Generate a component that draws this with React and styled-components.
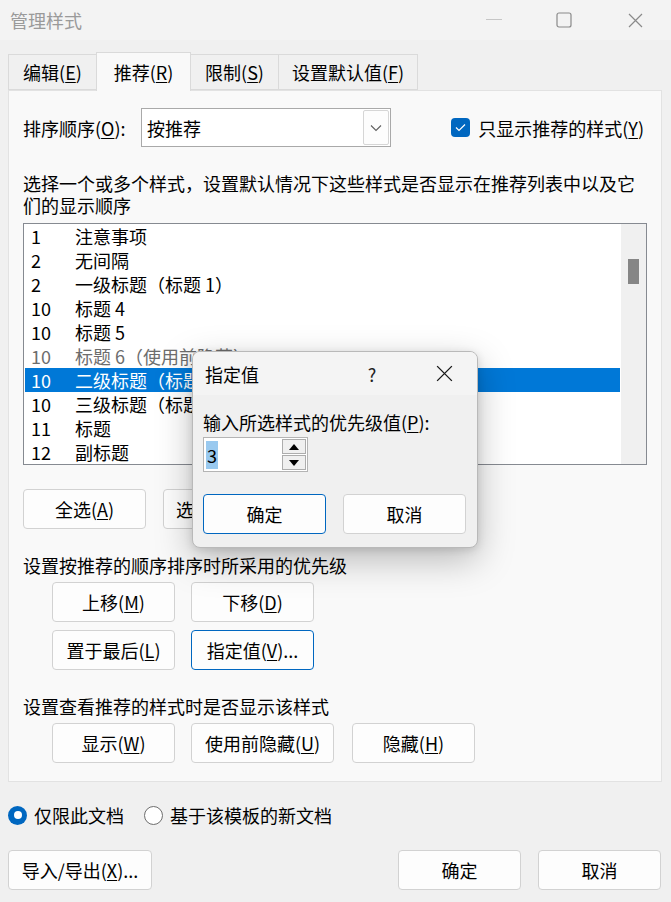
import styled, { createGlobalStyle } from "styled-components";

const GlobalStyle = createGlobalStyle`
  html, body {
    margin: 0;
    padding: 0;
    background: #f0f0f0;
  }
  body {
    font-family: "Noto Sans CJK SC", "Noto Sans", sans-serif;
    font-size: 18px;
    color: #000;
  }
`;

const Window = styled.div`
  position: relative;
  width: 671px;
  height: 902px;
  overflow: hidden;
  background: #f0f0f0;
`;

const TitleBar = styled.div`
  display: flex;
  align-items: center;
  height: 40px;
  padding-left: 10px;
  background: #f3f3f3;
  color: #9a9a9a;
`;

const TitleText = styled.div`
  flex: 1;
  line-height: 22px;
`;

const WinButton = styled.div`
  display: flex;
  align-items: center;
  justify-content: center;
  width: ${(p) => p.w || 70}px;
  height: 40px;
`;

const TabStrip = styled.div`
  display: flex;
  align-items: flex-end;
  height: 38px;
  margin: 12px 0 0 8px;
  position: relative;
  z-index: 1;
`;

const Tab = styled.div`
  box-sizing: border-box;
  display: flex;
  align-items: center;
  justify-content: center;
  width: ${(p) => p.w}px;
  height: ${(p) => (p.active ? 39 : 36)}px;
  margin-left: -1px;
  margin-bottom: ${(p) => (p.active ? -1 : 0)}px;
  border: 1px solid #dadada;
  border-bottom: ${(p) => (p.active ? "none" : "1px solid #dadada")};
  background: ${(p) => (p.active ? "#f9f9f9" : "#f0f0f0")};
  line-height: 22px;
  &:first-child {
    margin-left: 0;
  }
`;

const Panel = styled.div`
  margin: 0 9px 0 8px;
  padding: 17px 14px 18px 14px;
  background: #f9f9f9;
  border: 1px solid #e2e2e2;
`;

const SortRow = styled.div`
  display: flex;
  align-items: center;
  height: 39px;
`;

const SortLabel = styled.div`
  width: 118px;
  line-height: 22px;
`;

const Select = styled.div`
  box-sizing: border-box;
  display: flex;
  align-items: center;
  width: 250px;
  height: 39px;
  padding: 0 1px 0 5px;
  background: #fff;
  border: 1px solid #a9a9a9;
`;

const SelectValue = styled.div`
  flex: 1;
  line-height: 22px;
`;

const DropButton = styled.div`
  box-sizing: border-box;
  display: flex;
  align-items: center;
  justify-content: center;
  width: 26px;
  height: 35px;
  border: 1px solid #d6d6d6;
  border-radius: 2px;
  background: #fdfdfd;
`;

const CheckLabel = styled.label`
  display: flex;
  align-items: center;
  gap: 8px;
  margin-left: auto;
  margin-right: 3px;
  line-height: 22px;
`;

const CheckBox = styled.span`
  display: flex;
  align-items: center;
  justify-content: center;
  width: 19px;
  height: 19px;
  border-radius: 4px;
  background: #0067c0;
`;

const Description = styled.div`
  margin-top: 25px;
  line-height: 22px;
`;

const ListBox = styled.div`
  box-sizing: border-box;
  display: flex;
  height: 242px;
  margin-top: 7px;
  padding-left: 1px;
  background: #fff;
  border: 1px solid #868a91;
`;

const ListItems = styled.div`
  width: 596px;
  margin-right: 1px;
`;

const ListRow = styled.div`
  display: flex;
  align-items: center;
  height: 24px;
  padding-left: 6px;
  background: ${(p) => (p.selected ? "#0078d7" : "transparent")};
  color: ${(p) => (p.selected ? "#fff" : p.muted ? "#6d6d6d" : "#000")};
  white-space: nowrap;
`;

const Priority = styled.span`
  width: 44px;
`;

const ScrollTrack = styled.div`
  display: flex;
  justify-content: center;
  width: 25px;
  padding-top: 35px;
  background: #f0f0f0;
`;

const ScrollThumb = styled.div`
  width: 11px;
  height: 25px;
  background: #868686;
`;

const ButtonRow = styled.div`
  display: flex;
  gap: ${(p) => p.gap || 16}px;
  margin: ${(p) => p.m || "0"};
`;

const ButtonGroup = styled.div`
  display: flex;
  flex-direction: column;
  gap: 8px;
  margin: 6px 0 0 29px;
`;

const Button = styled.div`
  box-sizing: border-box;
  display: flex;
  align-items: center;
  justify-content: center;
  width: ${(p) => p.w || 123}px;
  height: 40px;
  margin-left: ${(p) => p.ml || 0}px;
  background: #fdfdfd;
  border: 1px solid ${(p) => (p.focused ? "#0067c0" : "#d2d2d2")};
  border-radius: 4px;
  line-height: 22px;
  white-space: nowrap;
`;

const SectionLabel = styled.div`
  margin-top: 25px;
  line-height: 22px;
`;

const RadioRow = styled.div`
  display: flex;
  align-items: center;
  height: 24px;
  margin: 21px 0 0 8px;
`;

const RadioOption = styled.label`
  display: flex;
  align-items: center;
  gap: 7px;
  margin-right: 20px;
  line-height: 22px;
`;

const Radio = styled.span`
  box-sizing: border-box;
  display: flex;
  align-items: center;
  justify-content: center;
  width: 19px;
  height: 19px;
  border-radius: 50%;
  background: ${(p) => (p.checked ? "#0067c0" : "#fff")};
  border: ${(p) => (p.checked ? "none" : "1px solid #6e6e6e")};
  &::after {
    content: "";
    display: ${(p) => (p.checked ? "block" : "none")};
    width: 8px;
    height: 8px;
    border-radius: 50%;
    background: #fff;
  }
`;

const Footer = styled.div`
  display: flex;
  gap: 17px;
  margin: 23px 10px 0 8px;
`;

const Spacer = styled.div`
  flex: 1;
`;

const Popup = styled.div`
  position: absolute;
  left: 192px;
  top: 351px;
  box-sizing: border-box;
  width: 286px;
  height: 197px;
  overflow: hidden;
  background: #f0f0f0;
  border: 1px solid #b9b9b9;
  border-radius: 8px;
  box-shadow: 0 12px 36px rgba(0, 0, 0, 0.26), 0 2px 8px rgba(0, 0, 0, 0.12);
  z-index: 5;
`;

const PopupTitle = styled.div`
  display: flex;
  align-items: center;
  height: 43px;
  padding-left: 12px;
  background: #f4f4f4;
  line-height: 22px;
`;

const PopupHelp = styled.div`
  width: 32px;
  margin-right: 33px;
  text-align: center;
  color: #222;
`;

const PopupClose = styled.div`
  display: flex;
  align-items: center;
  justify-content: center;
  width: 46px;
  height: 43px;
  margin-right: 10px;
`;

const PopupBody = styled.div`
  padding: 16px 10px 0 10px;
`;

const PopupLabel = styled.div`
  line-height: 22px;
`;

const Spinner = styled.div`
  box-sizing: border-box;
  display: flex;
  align-items: center;
  width: 105px;
  height: 35px;
  margin-top: 4px;
  padding: 0 1px 0 2px;
  background: #fff;
  border: 1px solid #b4b4b4;
`;

const SpinValue = styled.div`
  flex: 1;
  line-height: 22px;
  span {
    background: #99c9ef;
    padding: 1px 1px;
  }
`;

const SpinButtons = styled.div`
  display: flex;
  flex-direction: column;
  gap: 1px;
  width: 24px;
`;

const SpinButton = styled.div`
  box-sizing: border-box;
  display: flex;
  align-items: center;
  justify-content: center;
  height: 15px;
  background: #f0f0f0;
  border: 1px solid #adadad;
`;

const Key = styled.u`
  text-underline-offset: 2px;
`;

const rows = [
  { n: "1", name: "注意事项" },
  { n: "2", name: "无间隔" },
  { n: "2", name: "一级标题（标题 1）" },
  { n: "10", name: "标题 4" },
  { n: "10", name: "标题 5" },
  { n: "10", name: "标题 6（使用前隐藏）", muted: true },
  { n: "10", name: "二级标题（标题 2）", selected: true },
  { n: "10", name: "三级标题（标题 3）" },
  { n: "11", name: "标题" },
  { n: "12", name: "副标题" },
];

const Chevron = () => (
  <svg width="12" height="8" viewBox="0 0 12 8">
    <path d="M1 1.5 L6 6.5 L11 1.5" fill="none" stroke="#5f5f5f" strokeWidth="1.1" />
  </svg>
);

const CloseGlyph = ({ color = "#8a8a8a", size = 15 }) => (
  <svg width={size} height={size} viewBox="0 0 15 15">
    <path d="M1 1 L14 14 M14 1 L1 14" stroke={color} strokeWidth="1.2" />
  </svg>
);

export default function App() {
  return (
    <>
      <GlobalStyle />
      <Window>
        <TitleBar>
          <TitleText>管理样式</TitleText>
          <WinButton>
            <svg width="16" height="2" viewBox="0 0 16 2">
              <rect width="16" height="1" fill="#c6c6c6" />
            </svg>
          </WinButton>
          <WinButton>
            <svg width="16" height="16" viewBox="0 0 16 16">
              <rect x="1" y="1" width="14" height="14" rx="2" fill="none" stroke="#8a8a8a" strokeWidth="1.2" />
            </svg>
          </WinButton>
          <WinButton w={72}>
            <CloseGlyph />
          </WinButton>
        </TitleBar>

        <TabStrip>
          <Tab w={89}>编辑(<Key>E</Key>)</Tab>
          <Tab w={95} active>推荐(<Key>R</Key>)</Tab>
          <Tab w={89}>限制(<Key>S</Key>)</Tab>
          <Tab w={140}>设置默认值(<Key>F</Key>)</Tab>
        </TabStrip>

        <Panel>
          <SortRow>
            <SortLabel>排序顺序(<Key>O</Key>):</SortLabel>
            <Select>
              <SelectValue>按推荐</SelectValue>
              <DropButton>
                <Chevron />
              </DropButton>
            </Select>
            <CheckLabel>
              <CheckBox>
                <svg width="11" height="9" viewBox="0 0 11 9">
                  <path d="M1 4.5 L4 7.5 L10 1.5" fill="none" stroke="#fff" strokeWidth="1.2" />
                </svg>
              </CheckBox>
              <span>只显示推荐的样式(<Key>Y</Key>)</span>
            </CheckLabel>
          </SortRow>

          <Description>
            选择一个或多个样式，设置默认情况下这些样式是否显示在推荐列表中以及它们的显示顺序
          </Description>

          <ListBox>
            <ListItems>
              {rows.map((r, i) => (
                <ListRow key={i} selected={r.selected} muted={r.muted}>
                  <Priority>{r.n}</Priority>
                  {r.name}
                </ListRow>
              ))}
            </ListItems>
            <ScrollTrack>
              <ScrollThumb />
            </ScrollTrack>
          </ListBox>

          <ButtonRow gap={17} m="24px 0 0 0">
            <Button>全选(<Key>A</Key>)</Button>
            <Button>选择内置(<Key>N</Key>)</Button>
          </ButtonRow>

          <SectionLabel>设置按推荐的顺序排序时所采用的优先级</SectionLabel>
          <ButtonGroup>
            <ButtonRow>
              <Button>上移(<Key>M</Key>)</Button>
              <Button>下移(<Key>D</Key>)</Button>
            </ButtonRow>
            <ButtonRow>
              <Button>置于最后(<Key>L</Key>)</Button>
              <Button focused>指定值(<Key>V</Key>)...</Button>
            </ButtonRow>
          </ButtonGroup>

          <SectionLabel>设置查看推荐的样式时是否显示该样式</SectionLabel>
          <ButtonGroup>
            <ButtonRow>
              <Button>显示(<Key>W</Key>)</Button>
              <Button w={143}>使用前隐藏(<Key>U</Key>)</Button>
              <Button ml={2}>隐藏(<Key>H</Key>)</Button>
            </ButtonRow>
          </ButtonGroup>
        </Panel>

        <RadioRow>
          <RadioOption>
            <Radio checked />
            <span>仅限此文档</span>
          </RadioOption>
          <RadioOption>
            <Radio />
            <span>基于该模板的新文档</span>
          </RadioOption>
        </RadioRow>

        <Footer>
          <Button w={144}>导入/导出(<Key>X</Key>)...</Button>
          <Spacer />
          <Button>确定</Button>
          <Button>取消</Button>
        </Footer>

        <Popup>
          <PopupTitle>
            <TitleText>指定值</TitleText>
            <PopupHelp>?</PopupHelp>
            <PopupClose>
              <CloseGlyph color="#1a1a1a" size={17} />
            </PopupClose>
          </PopupTitle>
          <PopupBody>
            <PopupLabel>输入所选样式的优先级值(<Key>P</Key>):</PopupLabel>
            <Spinner>
              <SpinValue>
                <span>3</span>
              </SpinValue>
              <SpinButtons>
                <SpinButton>
                  <svg width="10" height="6" viewBox="0 0 10 6">
                    <path d="M5 0 L10 6 L0 6 Z" fill="#000" />
                  </svg>
                </SpinButton>
                <SpinButton>
                  <svg width="10" height="6" viewBox="0 0 10 6">
                    <path d="M0 0 L10 0 L5 6 Z" fill="#000" />
                  </svg>
                </SpinButton>
              </SpinButtons>
            </Spinner>
            <ButtonRow gap={17} m="22px 0 0 0">
              <Button focused>确定</Button>
              <Button>取消</Button>
            </ButtonRow>
          </PopupBody>
        </Popup>
      </Window>
    </>
  );
}
